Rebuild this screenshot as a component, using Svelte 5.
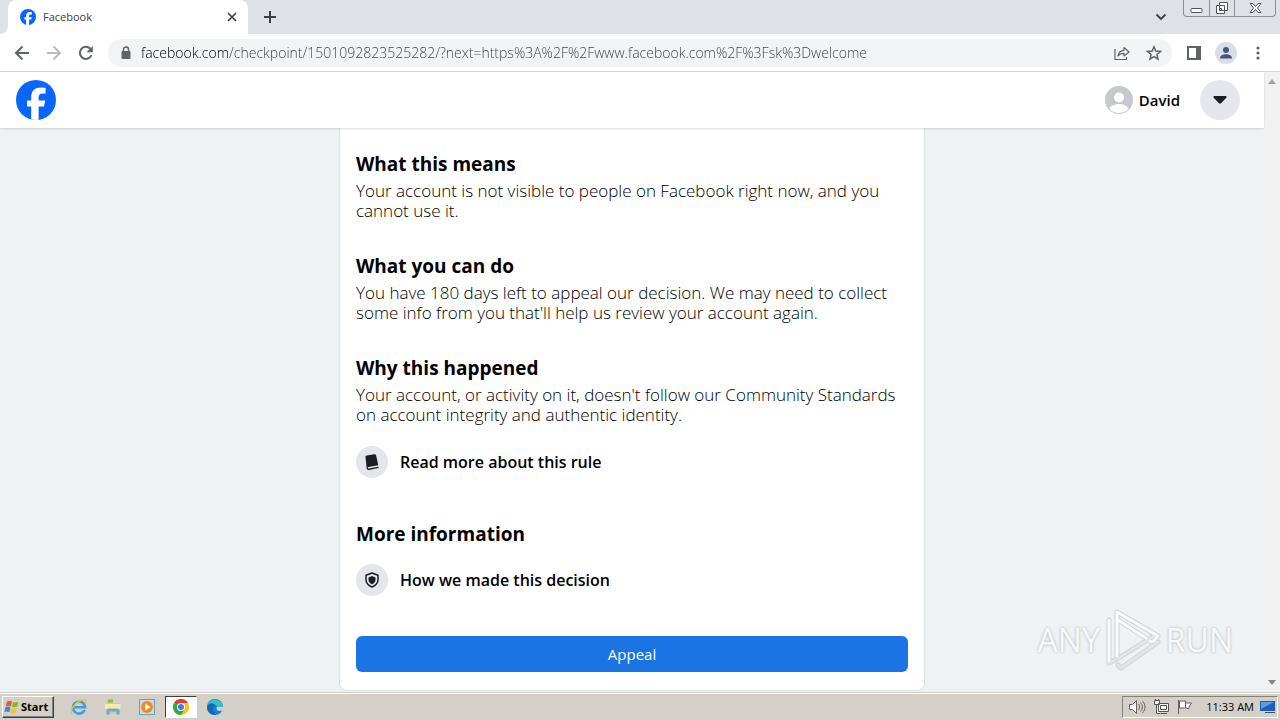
<script>
  const sections = [
    {
      title: 'What this means',
      lines: ['Your account is not visible to people on Facebook right now, and you', 'cannot use it.']
    },
    {
      title: 'What you can do',
      lines: ['You have 180 days left to appeal our decision. We may need to collect', "some info from you that'll help us review your account again."]
    },
    {
      title: 'Why this happened',
      lines: ["Your account, or activity on it, doesn't follow our Community Standards", 'on account integrity and authentic identity.']
    }
  ];
  let address = $state('facebook.com/checkpoint/1501092823525282/?next=https%3A%2F%2Fwww.facebook.com%2F%3Fsk%3Dwelcome');
</script>

{#snippet fbLogo(size)}
  <svg width={size} height={size} viewBox="0 0 40 40" aria-hidden="true">
    <circle cx="20" cy="20" r="20" fill="#0866ff" />
    <path fill="#fff" d="M15.2 39.5V26.4H11v-6h4.2v-2.7c0-7 3.2-10.2 10-10.2 1.3 0 3.5.2 4.4.5v5.6c-.5 0-1.300-.1-2.300-.1-3.400 0-4.700 1.300-4.700 4.600v2.300h6.600l-1.200 6h-5.400v13.300a20 20 0 0 1-7.400-.2z" />
  </svg>
{/snippet}

<div class="screen">
  <header class="tabs">
    <div class="edge"></div>
    <div class="tab">
      {@render fbLogo(16)}
      <span class="tab-title">Facebook</span>
      <button class="plain" aria-label="Close tab">
        <svg width="10" height="10" viewBox="0 0 10 10"><path d="M1 1l8 8M9 1l-8 8" stroke="#3c4043" stroke-width="1.700" /></svg>
      </button>
    </div>
    <button class="plain new-tab" aria-label="New tab">
      <svg width="12" height="12" viewBox="0 0 12 12"><path d="M6 0v12M0 6h12" stroke="#3c4043" stroke-width="2" /></svg>
    </button>
    <button class="plain search-tabs" aria-label="Search tabs">
      <svg width="12" height="8" viewBox="0 0 12 8"><path d="M1.500 1.500L6 6l4.500-4.500" fill="none" stroke="#3c4043" stroke-width="1.800" /></svg>
    </button>
    <div class="win-buttons">
      <button aria-label="Minimize"><svg width="13" height="16" viewBox="0 0 13 16"><rect x="1" y="8.500" width="11" height="4" rx="1" fill="#fff" stroke="#50545e" /></svg></button>
      <button aria-label="Restore"><svg width="14" height="16" viewBox="0 0 14 16" fill="#fff" stroke="#50545e"><path d="M4.500 2.500h8v8h-8zM1.500 5.500h8v8h-8zM4.500 8.500h2v2h-2z" /></svg></button>
      <button class="wide" aria-label="Close"><svg width="13" height="16" viewBox="0 0 13 16"><path d="M1 3.500h3l2.500 3 2.500-3h3L8.500 8l3.500 4.500H9l-2.500-3-2.500 3H1L4.500 8z" fill="#fff" stroke="#50545e" /></svg></button>
    </div>
  </header>

  <nav class="toolbar">
    <button class="plain nav" aria-label="Back"><svg width="16" height="16" viewBox="0 0 16 16" fill="none" stroke="#5f6368" stroke-width="2"><path d="M15 8H2.500M8.500 1.500L2 8l6.500 6.500" /></svg></button>
    <button class="plain nav" aria-label="Forward"><svg width="16" height="16" viewBox="0 0 16 16" fill="none" stroke="#b9bcc0" stroke-width="2"><path d="M1 8h12.500M7.500 1.500L14 8l-6.500 6.500" /></svg></button>
    <button class="plain nav" aria-label="Reload"><svg width="16" height="16" viewBox="0 0 16 16"><path d="M13.500 10A6 6 0 1 1 12.300 3.800" fill="none" stroke="#5f6368" stroke-width="2" /><path d="M14.800 1v6.200H8.600z" fill="#5f6368" /></svg></button>
    <div class="omnibox">
      <svg width="10" height="14" viewBox="0 0 10 14"><rect x="0.500" y="5" width="9" height="8" rx="1" fill="#5f6368" /><path d="M2.500 5.500V3.500a2.500 2.500 0 0 1 5 0v2" fill="none" stroke="#5f6368" stroke-width="1.500" /></svg>
      <input class="address" type="text" aria-label="Address" spellcheck="false" bind:value={address} />
      <button class="plain icon" aria-label="Share"><svg width="16" height="16" viewBox="0 0 16 16" fill="none" stroke="#5f6368" stroke-width="1.200"><path d="M1 4v10.500h11.500V12" /><path d="M4 11c.5-4 2.500-5.500 6-5.700V2.500l5 4.500-5 4V8.300c-2.500 0-4.500.6-6 2.700z" stroke-linejoin="round" /></svg></button>
      <button class="plain icon" aria-label="Bookmark"><svg width="16" height="16" viewBox="0 0 16 16"><path d="M8 1.800l1.800 4.300 4.700.4-3.600 3 1.100 4.600L8 11.700l-4 2.400 1.100-4.600-3.600-3 4.700-.4z" fill="none" stroke="#5f6368" stroke-width="1.500" /></svg></button>
    </div>
    <button class="plain icon" aria-label="Side panel"><svg width="14" height="14" viewBox="0 0 14 14"><path d="M0 0h14v14H0zM2 2v10h7V2z" fill="#5f6368" fill-rule="evenodd" /></svg></button>
    <button class="plain icon" aria-label="Profile"><svg width="22" height="22" viewBox="0 0 22 22"><circle cx="11" cy="11" r="11" fill="#dadfe7" /><circle cx="11" cy="8" r="3" fill="#475779" /><path d="M5 16.500c0-3 3-4.300 6-4.300s6 1.300 6 4.300z" fill="#475779" /></svg></button>
    <button class="plain icon" aria-label="Menu"><svg width="4" height="14" viewBox="0 0 4 14" fill="#5f6368"><circle cx="2" cy="2" r="1.600" /><circle cx="2" cy="7" r="1.600" /><circle cx="2" cy="12" r="1.600" /></svg></button>
  </nav>

  <div class="viewport">
    <div class="page">
      <header class="site-bar">
        <a href="#home" aria-label="Facebook">{@render fbLogo(40)}</a>
        <a class="user" href="#profile">
          <svg width="28" height="28" viewBox="0 0 28 28" aria-hidden="true"><defs><clipPath id="face"><circle cx="14" cy="14" r="13" /></clipPath></defs><circle cx="14" cy="14" r="14" fill="#c5c8cd" /><g clip-path="url(#face)" fill="#fff"><circle cx="14" cy="11.500" r="5" /><path d="M4 25c0-5 5-7 10-7s10 2 10 7l-3 4H7z" /></g></svg>
          <span>David</span>
        </a>
        <button class="account" aria-label="Account menu"><svg width="14" height="8" viewBox="0 0 14 8"><path d="M1.500 0h11c1 0 1.500 1 .8 1.700L8 7.300a1.500 1.500 0 0 1-2 0L.7 1.700C0 1 .5 0 1.500 0z" fill="#1c1e21" /></svg></button>
      </header>

      <div class="canvas">
        <main class="card">
          {#each sections as s}
            <section>
              <h2>{s.title}</h2>
              <p>{s.lines[0]}<br />{s.lines[1]}</p>
            </section>
          {/each}
          <a class="row" href="#rule">
            <span class="badge"><svg width="16" height="16" viewBox="0 0 16 16"><path d="M1.500 3.200C1.300 2.300 1.800 1.700 2.600 1.500L10.500.2c.8-.1 1.400.3 1.600 1.100l2.200 9.900-9.600 1.900c-.6.100-.9.500-.8 1 .1.400.500.600 1 .5l9.500-1.800.2 1.200-9.700 1.900c-1.200.2-2-.3-2.200-1.400z" fill="#1c1e21" /></svg></span>
            <span>Read more about this rule</span>
          </a>
          <h2 class="more">More information</h2>
          <a class="row decision" href="#decision">
            <span class="badge"><svg width="16" height="16" viewBox="0 0 16 16"><path d="M8 1l6 2.200v4.300c0 3.500-2.500 6-6 7.500-3.500-1.500-6-4-6-7.500V3.200z" fill="none" stroke="#1c1e21" stroke-width="1.500" stroke-linejoin="round" /><path d="M8 4l3.500 1.400v2.300c0 2.200-1.300 3.500-3.500 4.500-2.200-1-3.500-2.300-3.500-4.500V5.400z" fill="#1c1e21" /></svg></span>
            <span>How we made this decision</span>
          </a>
          <button class="appeal">Appeal</button>
        </main>

        <div class="watermark">
          <span>ANY</span>
          <svg width="58" height="64" viewBox="0 0 58 64" fill="none" stroke-linejoin="round" stroke-linecap="round">
            <g stroke="#cfd3d6" stroke-width="5"><path d="M13 48V4l41 24-4 5M5 12v43l8-4 37-23M14 12l34 22M54 34L17 60l-3-3" /></g>
            <g stroke="#f9fbfc" stroke-width="3"><path d="M13 48V4l41 24-4 5M5 12v43" /><path d="M14 12l34 22" /></g>
            <path d="M5 55l8-4 37-23M54 34L17 60l-3-3" stroke="#e3e6e8" stroke-width="3" />
          </svg>
          <span>RUN</span>
        </div>
      </div>
    </div>
    <div class="scroll" aria-hidden="true">
      <svg width="8" height="5" viewBox="0 0 8 5"><path d="M4 0l4 5H0z" fill="#a3a3a3" /></svg>
      <svg width="8" height="5" viewBox="0 0 8 5"><path d="M4 5l4-5H0z" fill="#858585" /></svg>
    </div>
  </div>

  <footer class="taskbar">
    <button class="start">
      <svg width="16" height="16" viewBox="0 0 16 16"><path d="M3 2.500c2-1 3.500-.8 5 0L6.800 7.300c-1.500-.8-3-.9-5 0z" fill="#e8562a" /><path d="M9 3c1.500.8 3.300.9 5.500-.2l-1.300 4.800c-2 1-3.700.9-5.300.1z" fill="#7fb83a" /><path d="M1.500 8.300c2-1 3.500-.8 5 0l-1.200 4.900c-1.500-.9-3-1-5 0z" fill="#3f83d6" /><path d="M7.600 8.800c1.500.8 3.300.9 5.300-.1l-1.200 4.800c-2 1-3.700 1-5.300.1z" fill="#f7c52b" /></svg>
      Start
    </button>
    <div class="apps">
      <button class="app" aria-label="Internet Explorer"><svg width="18" height="18" viewBox="0 0 18 18" fill="none"><path d="M14.500 12A6 6 0 1 1 15 9.300H4.500" stroke="#3d9fdb" stroke-width="2.600" /><path d="M2 16C-1 13 5 4 12 2c3-1 5 0 4 3" stroke="#e9bd3c" stroke-width="1.400" /></svg></button>
      <button class="app" aria-label="Explorer"><svg width="18" height="18" viewBox="0 0 18 18"><path d="M2 3h6l1 2h7v11H2z" fill="#e8cb68" /><path d="M4 1.500h5v3H4z" fill="#7fba67" /><path d="M1 6h15.500v5H1z" fill="#f8e9ab" /><path d="M2.500 16.500V12l2-1.500h9l2 1.500v4.500h-3v-3h-7v3z" fill="#5faedd" /></svg></button>
      <button class="app" aria-label="Media Player"><svg width="18" height="18" viewBox="0 0 18 18"><rect x="1.500" y="1.500" width="15" height="15" fill="#c5dcf0" stroke="#6d9cc5" /><circle cx="9" cy="9" r="6" fill="#f48a1b" /><path d="M7 5.500l5.500 3.500L7 12.500z" fill="#fff" /></svg></button>
      <button class="app active" aria-label="Chrome"><svg width="18" height="18" viewBox="0 0 18 18"><circle cx="9" cy="9" r="8" fill="#fbc116" /><path d="M9 9L2.070 5A8 8 0 0 1 15.930 5H9z" fill="#e33b2e" /><path d="M2.070 5A8 8 0 0 0 9 17l3.500-6L9 9z" fill="#2da94f" /><circle cx="9" cy="9" r="4" fill="#fff" /><circle cx="9" cy="9" r="3" fill="#3b7ded" /></svg></button>
      <button class="app" aria-label="Edge"><svg width="18" height="18" viewBox="0 0 18 18"><circle cx="9" cy="9" r="8" fill="#1682d4" /><path d="M1.200 8A8 8 0 0 1 17 9c0 3-3 4-6 3 1.500-2 .5-5-2.500-5C5 7 3 8 1.200 8z" fill="#36c3c0" /><path d="M1 9c1-4 7-5 8.500-1.500C6 7.500 5.500 13 10 16.500 4 18 1 13 1 9z" fill="#1267b8" /><path d="M10 9c1.500 1 .3 2.500 1 3 2 1.300 4.500 1 6 0l1 1V9z" fill="#d4d0c8" /></svg></button>
    </div>
    <div class="tray">
      <svg width="18" height="18" viewBox="0 0 18 18" fill="#fff" stroke="#65635e"><path d="M1.500 6.500h3l4-4v13l-4-4h-3z" /><path d="M10.500 6c1.500 2 1.500 4 0 6M12.500 4.500c2.500 3 2.500 6 0 9M14.500 3c3.300 4 3.300 8 0 12" fill="none" /></svg>
      <svg width="18" height="18" viewBox="0 0 18 18" fill="#f5f4f1" stroke="#55534e"><path d="M6.500 5.500h10v8h-10zM8.500 7.500h6v4h-6zM9 15.500h6M2.500 2.500h5v4h-5zM4.500 6.500v9h4M3.500 1v2M6.500 1v2" /></svg>
      <svg width="18" height="18" viewBox="0 0 18 18" fill="#fff" stroke="#65635e"><path d="M2.500 2v14M3.500 3h6v7h-6zM9.500 5h6l-2 3-1 3-3-1.500z" /></svg>
      <time>11:33 AM</time>
      <svg width="16" height="14" viewBox="0 0 16 14"><path d="M0 1h15v10H0z" fill="#1c5fb5" /><path d="M1 2h13L1 9z" fill="#5e9be2" /><path d="M5 12h10v1H5z" fill="#344e70" /></svg>
    </div>
  </footer>
</div>

<style>
  :global(body) { margin: 0; }
  .screen, .screen * { box-sizing: border-box; }
  .screen {
    min-height: 100vh;
    display: flex;
    flex-direction: column;
    font-family: "Open Sans", "Noto Sans", sans-serif;
    color: #000;
  }
  svg { display: block; flex: none; }
  button { font: inherit; color: inherit; cursor: pointer; }
  a { color: inherit; text-decoration: none; }
  .plain {
    display: flex;
    align-items: center;
    justify-content: center;
    padding: 0;
    border: 0;
    background: none;
  }

  .tabs { display: flex; height: 34px; background: #dee1e6; }
  .edge { width: 8px; background: #fff; }
  .edge::before {
    content: "";
    display: block;
    height: 100%;
    background: #dee1e6;
    border-bottom-right-radius: 8px;
  }
  .tab {
    display: flex;
    align-items: center;
    gap: 7px;
    width: 240px;
    padding: 0 11px 0 12px;
    background: #fff;
    border-radius: 8px 8px 0 0;
  }
  .tab-title { flex: 1; font-size: 11px; line-height: 16px; color: #3c4043; }
  .new-tab { width: 44px; }
  .search-tabs { width: 24px; margin-left: auto; margin-right: 10px; }
  .win-buttons {
    display: flex;
    height: 17px;
    margin-right: 4px;
    border: 1px solid #8b8f98;
    border-top: 0;
    border-radius: 0 0 4px 4px;
  }
  .win-buttons button {
    display: flex;
    justify-content: center;
    width: 25px;
    padding: 0;
    border: 0;
    background: none;
  }
  .win-buttons button + button { border-left: 1px solid #8b8f98; }
  .win-buttons .wide { width: 41px; }

  .toolbar {
    display: flex;
    align-items: center;
    height: 38px;
    padding: 0 6px;
    background: #fff;
    border-bottom: 1px solid #d5d7da;
  }
  .nav { width: 32px; height: 32px; }
  .omnibox {
    flex: 1;
    display: flex;
    align-items: center;
    height: 28px;
    margin: 0 6px;
    padding: 0 2px 0 13px;
    border-radius: 14px;
    background: #f1f3f4;
  }
  .address {
    flex: 1;
    min-width: 0;
    height: 24px;
    margin-left: 10px;
    padding: 0;
    border: 0;
    outline: 0;
    font-family: inherit;
    font-size: 14px;
    line-height: 24px;
    font-weight: 300;
    color: transparent;
    caret-color: #202124;
    background: linear-gradient(90deg, #000 88px, #3c4043 88px);
    background-clip: text;
  }
  .icon { width: 32px; height: 28px; }

  .viewport { flex: 1; display: flex; background: #eff2f5; }
  .page { flex: 1; display: flex; flex-direction: column; }
  .site-bar {
    z-index: 1;
    display: flex;
    align-items: center;
    height: 56px;
    padding: 0 24px 0 16px;
    background: #fff;
    box-shadow: 0 1px 2px #0002;
  }
  .user {
    display: flex;
    align-items: center;
    gap: 6px;
    margin-left: auto;
    margin-right: 20px;
    font-size: 15px;
    font-weight: 600;
  }
  .account {
    display: grid;
    place-items: center;
    width: 40px;
    height: 40px;
    padding: 0;
    border: 0;
    border-radius: 50%;
    background: #e4e6eb;
  }
  .canvas { position: relative; flex: 1; padding: 0 16px; }
  .card {
    display: flex;
    flex-direction: column;
    max-width: 586px;
    margin: 0 auto;
    padding: 24px 16px 18px;
    background: #fff;
    border: 1px solid #dfe2e6;
    border-top: 0;
    border-radius: 0 0 8px 8px;
  }
  section { margin-bottom: 33px; }
  section:last-of-type { margin-bottom: 21px; }
  h2 { margin: 0; font-size: 19px; line-height: 24px; font-weight: 700; }
  p { margin: 5px 0 0; font-size: 17px; line-height: 20px; font-weight: 300; }
  .row { display: flex; align-items: center; gap: 12px; font-size: 16px; line-height: 20px; font-weight: 600; }
  .badge {
    display: grid;
    place-items: center;
    width: 32px;
    height: 32px;
    border-radius: 50%;
    background: #e4e6eb;
  }
  .more { margin-top: 44px; }
  .decision { margin-top: 18px; }
  .appeal {
    height: 36px;
    margin-top: 40px;
    border: 0;
    border-radius: 6px;
    background: #1b74e4;
    color: #fff;
    font-size: 15px;
  }
  .watermark {
    position: absolute;
    right: 31px;
    bottom: 20px;
    display: flex;
    align-items: center;
    gap: 4px;
    font-size: 32px;
    line-height: 40px;
    color: #f7f9fa;
    text-shadow: 0 0 3px #a9aeb2;
  }
  .scroll {
    display: flex;
    flex-direction: column;
    justify-content: space-between;
    align-items: center;
    width: 16px;
    padding: 7px 0;
    background: #f1f1f1;
  }

  .taskbar {
    display: flex;
    align-items: center;
    height: 28px;
    padding: 1px 2px 0;
    background: #d4d0c8;
    border-top: 1px solid #d4d0c8;
    box-shadow: inset 0 1px #fff;
  }
  .start {
    display: flex;
    align-items: center;
    gap: 1px;
    width: 52px;
    height: 22px;
    padding: 0 1px;
    border: 1px solid;
    border-color: #fff #404040 #404040 #fff;
    box-shadow: inset -1px -1px #808080;
    background: #d4d0c8;
    font-size: 11px;
    font-weight: 700;
    line-height: 16px;
  }
  .apps { display: flex; gap: 2px; margin-left: 9px; }
  .app {
    display: grid;
    place-items: center;
    width: 32px;
    height: 22px;
    padding: 0;
    border: 1px solid transparent;
    background: none;
  }
  .app.active { background: #fff; border-color: #404040 #fff #fff #404040; }
  .tray {
    display: flex;
    align-items: center;
    gap: 6px;
    height: 22px;
    margin-left: auto;
    padding: 0 1px 0 5px;
    border: 1px solid;
    border-color: #808080 #fff #fff #808080;
  }
  time { margin-left: 6px; font-size: 11px; line-height: 16px; }
</style>
